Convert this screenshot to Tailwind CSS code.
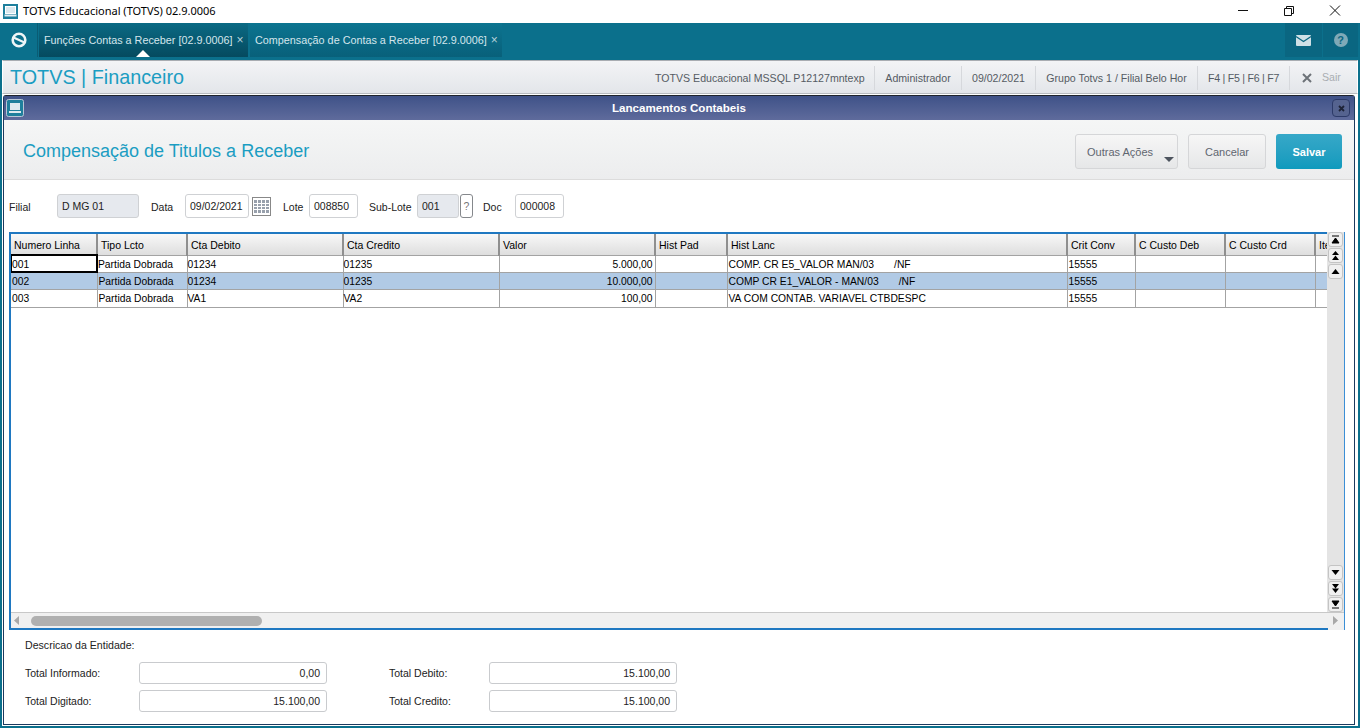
<!DOCTYPE html>
<html lang="pt-BR">
<head>
<meta charset="UTF-8">
<title>TOTVS Educacional</title>
<script src="https://cdn.jsdelivr.net/npm/@tailwindcss/browser@4"></script>
</head>
<body class="bg-white">
<div class="w-[1360px] h-[728px] overflow-hidden flex flex-col font-['Liberation_Sans',sans-serif] text-[11px] text-[#222]">

  <!-- window title bar -->
  <div class="h-[23px] bg-white flex items-center shrink-0">
    <svg class="ml-[3px] w-[15px] h-[15px]" viewBox="0 0 15 15"><rect width="15" height="15" fill="#1d7f9c"/><rect x="2.500" y="2.500" width="10" height="7" fill="#dbe8ee" stroke="#fff"/><rect x="1.500" y="10.500" width="12" height="2" fill="#e6eef2"/></svg>
    <span class="ml-[5px] font-['Noto_Sans',sans-serif] text-[11px] text-black">TOTVS Educacional (TOTVS) 02.9.0006</span>
    <div class="ml-auto flex items-center">
      <svg class="w-[46px] h-[23px]" viewBox="0 0 46 23"><path d="M18 10.500H28" stroke="#111"/></svg>
      <svg class="w-[46px] h-[23px]" viewBox="0 0 46 23"><path d="M18.500 8.500h7v7h-7zM20.500 8.500v-2h7v7h-2" fill="none" stroke="#111"/></svg>
      <svg class="w-[46px] h-[23px] mr-[2px]" viewBox="0 0 46 23"><path d="M18 5.500l10 10M28 5.500l-10 10" stroke="#111"/></svg>
    </div>
  </div>

  <!-- module tabs -->
  <div class="h-[37px] shrink-0 bg-[#0b708c] flex items-start">
    <div class="w-[38px] h-[34px] flex items-center justify-center border-r border-[#0a5c74]">
      <svg class="w-[18px] h-[18px]" viewBox="0 0 18 18"><circle cx="9" cy="9" r="6.300" fill="none" stroke="#eef5f7" stroke-width="2.600"/><path d="M3.500 6.500L14.500 11.500" stroke="#eef5f7" stroke-width="2.200"/></svg>
    </div>
    <div class="relative ml-[1px] w-[209px] h-[34px] bg-gradient-to-b from-[#0b6a84] to-[#054a5f] flex items-center pl-[5px] text-[#d5e6ec] text-[10.800px] whitespace-nowrap">
      <span>Funções Contas a Receber [02.9.0006]</span>
      <span class="ml-[4px] text-[#b7d2da] text-[12px] leading-none">×</span>
      <div class="absolute left-[97px] bottom-0 w-0 h-0 border-x-[7px] border-x-transparent border-b-[7px] border-b-white"></div>
    </div>
    <div class="ml-[2px] w-[252px] h-[34px] bg-gradient-to-b from-[#0c7490] to-[#08607a] flex items-center pl-[5px] text-[#d5e6ec] text-[10.800px] whitespace-nowrap">
      <span>Compensação de Contas a Receber [02.9.0006]</span>
      <span class="ml-[4px] text-[#b7d2da] text-[12px] leading-none">×</span>
    </div>
    <div class="ml-auto w-[37px] h-[34px] bg-[#0a6681] flex items-center justify-center">
      <svg class="w-[15px] h-[11px]" viewBox="0 0 15 11"><rect width="15" height="11" rx="1" fill="#cfe0e6"/><path d="M0 1.500L7.500 6.500L15 1.500" fill="none" stroke="#0a6681" stroke-width="1.200"/></svg>
    </div>
    <div class="ml-[1px] mr-[2px] w-[35px] h-[34px] bg-[#0a6681] flex items-center justify-center">
      <span class="w-[14px] h-[14px] rounded-full bg-[#7fa9b7] text-[#0a6681] text-[11px] font-bold flex items-center justify-center">?</span>
    </div>
  </div>

  <!-- teal frame around the workspace -->
  <div class="flex-1 bg-[#0b708c] px-[2px] pb-[2px] flex flex-col min-h-0">
    <div class="flex-1 bg-white flex flex-col min-h-0">

      <!-- module header -->
      <div class="h-[34px] shrink-0 pt-[2px] bg-gradient-to-b from-[#f3f4f6] to-[#e3e6ea] border border-[#a9adb2] border-b-[#b9bcc0] border-x-[#fff] flex items-center">
        <div class="pl-[7px] text-[19.800px] leading-none text-[#1b9dc2]">TOTVS | Financeiro</div>
        <div class="ml-auto flex items-center h-[24px] text-[#555b63] text-[10.600px]">
          <div class="w-[231px] pl-[11px] border-r border-[#d6d8dc] leading-[24px]">TOTVS Educacional MSSQL P12127mntexp</div>
          <div class="w-[87px] text-center border-r border-[#d6d8dc] leading-[24px]">Administrador</div>
          <div class="w-[74px] text-center border-r border-[#d6d8dc] leading-[24px]">09/02/2021</div>
          <div class="w-[162px] text-center border-r border-[#d6d8dc] leading-[24px]">Grupo Totvs 1 / Filial Belo Hor</div>
          <div class="w-[92px] text-center border-r border-[#d6d8dc] leading-[24px] tracking-[-0.25px]">F4 | F5 | F6 | F7</div>
          <div class="w-[67px] flex items-center pl-[12px]">
            <svg class="w-[10px] h-[10px]" viewBox="0 0 10 10"><path d="M1 1l8 8M9 1l-8 8" stroke="#6d7278" stroke-width="2"/></svg>
            <span class="ml-[10px] text-[#a9adb2]">Sair</span>
          </div>
        </div>
      </div>

      <!-- dialog -->
      <div class="mt-[1px] ml-[1px] mr-[3px] mb-[1px] flex-1 min-h-0 flex flex-col bg-white border border-[#1c3a5e] border-t-[#20242c] rounded-t-[3px]">
        <div class="relative h-[24px] shrink-0 bg-gradient-to-b from-[#3f5288] to-[#5f6b9c] flex items-center justify-center">
          <svg class="absolute left-[2px] top-[3px] w-[18px] h-[18px]" viewBox="0 0 18 18"><rect x="0.500" y="0.500" width="17" height="17" rx="2" fill="#1f7f9c" stroke="#b8c6d6"/><rect x="4" y="4" width="10" height="7" fill="#dfeaf0"/><rect x="3" y="12" width="12" height="2" fill="#dfeaf0"/></svg>
          <span class="font-bold text-white text-[11.600px]">Lancamentos Contabeis</span>
          <div class="absolute right-[4px] top-[3px] w-[18px] h-[18px] rounded-[4px] bg-[#55638f] border border-[#2c3a68] flex items-center justify-center">
            <svg class="w-[7px] h-[7px]" viewBox="0 0 7 7"><path d="M1 1l5 5M6 1L1 6" stroke="#1d2337" stroke-width="1.800"/></svg>
          </div>
        </div>

        <div class="h-[60px] shrink-0 bg-gradient-to-b from-[#f5f6f6] to-[#ecedee] border-b border-[#dcdcdc] flex items-center">
          <div class="ml-[19px] mt-[4px] text-[18px] text-[#1b9dc2]">Compensação de Titulos a Receber</div>
          <div class="ml-auto mr-[12px] mt-[4px] flex items-center gap-[10px] text-[11px]">
            <div class="relative w-[103px] h-[35px] pt-[2px] rounded-[3px] border border-[#d5d6d8] bg-gradient-to-b from-[#f6f6f6] to-[#e6e7e8] text-[#5f6670] flex items-center pl-[11px]">
              Outras Ações
              <div class="absolute right-[3px] bottom-[6px] w-0 h-0 border-x-[5px] border-x-transparent border-t-[5px] border-t-[#4d545e]"></div>
            </div>
            <div class="w-[78px] h-[35px] pt-[2px] rounded-[3px] border border-[#d5d6d8] bg-gradient-to-b from-[#f6f6f6] to-[#e6e7e8] text-[#5f6670] flex items-center justify-center">Cancelar</div>
            <div class="w-[66px] h-[35px] pt-[2px] rounded-[3px] bg-gradient-to-b from-[#36a8c8] to-[#0e9abd] text-white font-bold flex items-center justify-center">Salvar</div>
          </div>
        </div>

        <!-- lote fields -->
        <div class="h-[52px] shrink-0 flex items-center pl-[5px] text-[10.500px]">
          <span class="w-[48px] pt-[3px]">Filial</span>
          <div class="w-[82px] h-[24px] rounded-[3px] border border-[#cfd1d4] bg-[#e6e9ee] pl-[4px] leading-[22px]">D MG 01</div>
          <span class="ml-[12px] w-[34px] pt-[3px]">Data</span>
          <div class="w-[64px] h-[24px] rounded-[3px] border border-[#cfd1d4] pl-[4px] leading-[22px]">09/02/2021</div>
          <svg class="ml-[3px] w-[19px] h-[19px]" viewBox="0 0 19 19">
            <rect x="0.500" y="0.500" width="18" height="18" fill="none" stroke="#111" stroke-dasharray="1 1"/>
            <path d="M2 3h15v13H2z" fill="#98a0ac"/>
            <path d="M2 6.500h15M2 9.500h15M2 12.500h15M5.500 3v13M9.500 3v13M13.500 3v13" stroke="#fff"/>
          </svg>
          <span class="ml-[12px] w-[26px] pt-[3px]">Lote</span>
          <div class="w-[49px] h-[24px] rounded-[3px] border border-[#cfd1d4] pl-[4px] leading-[22px]">008850</div>
          <span class="ml-[11px] w-[48px] pt-[3px]">Sub-Lote</span>
          <div class="w-[42px] h-[24px] rounded-[3px] border border-[#cfd1d4] bg-[#e6e9ee] pl-[4px] leading-[22px]">001</div>
          <div class="ml-[1px] w-[13px] h-[24px] rounded-[3px] border border-[#85888c] text-center leading-[22px] text-[#777]">?</div>
          <span class="ml-[10px] w-[32px] pt-[3px]">Doc</span>
          <div class="w-[49px] h-[24px] rounded-[3px] border border-[#cfd1d4] pl-[4px] leading-[22px]">000008</div>
        </div>

        <!-- grid -->
        <div class="ml-[5px] mr-[9px] h-[398px] shrink-0 border-l-2 border-l-[#1f78c1] border-r border-r-[#3b8fd6] flex flex-col overflow-hidden">
          <div class="flex-1 min-h-0 flex">
            <div class="w-[1316px] overflow-hidden border-t-2 border-[#1f78c1]">
              <table class="table-fixed w-[1316px] border-collapse text-[10.300px] text-black">
                <colgroup><col class="w-[86px]"><col class="w-[90px]"><col class="w-[156px]"><col class="w-[156px]"><col class="w-[156px]"><col class="w-[72px]"><col class="w-[340px]"><col class="w-[68px]"><col class="w-[90px]"><col class="w-[90px]"><col class="w-[12px]"></colgroup>
                <thead>
                  <tr class="h-[21px] bg-gradient-to-b from-[#f8f8f8] to-[#dedede] text-left text-[10.500px]">
                    <th class="font-normal border-r-2 border-[#8f8f8f] pl-[3px] pt-[3px]">Numero Linha</th>
                    <th class="font-normal border-r-2 border-[#8f8f8f] pl-[3px] pt-[3px]">Tipo Lcto</th>
                    <th class="font-normal border-r-2 border-[#8f8f8f] pl-[3px] pt-[3px]">Cta Debito</th>
                    <th class="font-normal border-r-2 border-[#8f8f8f] pl-[3px] pt-[3px]">Cta Credito</th>
                    <th class="font-normal border-r-2 border-[#8f8f8f] pl-[3px] pt-[3px]">Valor</th>
                    <th class="font-normal border-r-2 border-[#8f8f8f] pl-[3px] pt-[3px]">Hist Pad</th>
                    <th class="font-normal border-r-2 border-[#8f8f8f] pl-[3px] pt-[3px]">Hist Lanc</th>
                    <th class="font-normal border-r-2 border-[#8f8f8f] pl-[3px] pt-[3px]">Crit Conv</th>
                    <th class="font-normal border-r-2 border-[#8f8f8f] pl-[3px] pt-[3px]">C Custo Deb</th>
                    <th class="font-normal border-r-2 border-[#8f8f8f] pl-[3px] pt-[3px]">C Custo Crd</th>
                    <th class="font-normal pl-[3px] pt-[3px] overflow-hidden whitespace-nowrap">Ite</th>
                  </tr>
                </thead>
                <tbody class="[&_td]:pt-[1px]">
                  <tr class="h-[17px] border-y border-[#a3a3a3]">
                    <td class="outline-2 -outline-offset-1 outline-black pl-[1px]">001</td><td class="border-r border-[#a3a3a3] pl-[1px]">Partida Dobrada</td><td class="border-r border-[#a3a3a3]">01234</td><td class="border-r border-[#a3a3a3]">01235</td><td class="border-r border-[#a3a3a3] text-right pr-[2px]">5.000,00</td><td class="border-r border-[#a3a3a3]"></td><td class="border-r border-[#a3a3a3] pl-[1px] whitespace-pre">COMP. CR E5_VALOR MAN/03       /NF</td><td class="border-r border-[#a3a3a3] pl-[1px]">15555</td><td class="border-r border-[#a3a3a3]"></td><td class="border-r border-[#a3a3a3]"></td><td></td>
                  </tr>
                  <tr class="h-[17px] border-y border-[#a3a3a3] bg-[#b1cae5]">
                    <td class="border-r border-[#a3a3a3] pl-[1px]">002</td><td class="border-r border-[#a3a3a3] pl-[1px]">Partida Dobrada</td><td class="border-r border-[#a3a3a3]">01234</td><td class="border-r border-[#a3a3a3]">01235</td><td class="border-r border-[#a3a3a3] text-right pr-[2px]">10.000,00</td><td class="border-r border-[#a3a3a3]"></td><td class="border-r border-[#a3a3a3] pl-[1px] whitespace-pre">COMP CR E1_VALOR - MAN/03       /NF</td><td class="border-r border-[#a3a3a3] pl-[1px]">15555</td><td class="border-r border-[#a3a3a3]"></td><td class="border-r border-[#a3a3a3]"></td><td></td>
                  </tr>
                  <tr class="h-[17px] border-y border-[#a3a3a3]">
                    <td class="border-r border-[#a3a3a3] pl-[1px]">003</td><td class="border-r border-[#a3a3a3] pl-[1px]">Partida Dobrada</td><td class="border-r border-[#a3a3a3]">VA1</td><td class="border-r border-[#a3a3a3]">VA2</td><td class="border-r border-[#a3a3a3] text-right pr-[2px]">100,00</td><td class="border-r border-[#a3a3a3]"></td><td class="border-r border-[#a3a3a3] pl-[1px]">VA COM CONTAB. VARIAVEL CTBDESPC</td><td class="border-r border-[#a3a3a3] pl-[1px]">15555</td><td class="border-r border-[#a3a3a3]"></td><td class="border-r border-[#a3a3a3]"></td><td></td>
                  </tr>
                </tbody>
              </table>
            </div>
            <!-- vertical scroller buttons -->
            <div class="w-[17px] bg-[#e4e4e4] flex flex-col items-center gap-[1px]">
              <button class="w-[15px] h-[15px] rounded-[3px] border border-[#c4c4c4] bg-[#f0f0f0] flex items-center justify-center"><svg class="w-[9px] h-[9px]" viewBox="0 0 9 9"><path d="M1 1h7M4.500 3L8 8H1z" stroke="#000" fill="#000"/></svg></button>
              <button class="w-[15px] h-[15px] rounded-[3px] border border-[#c4c4c4] bg-[#f0f0f0] flex items-center justify-center"><svg class="w-[9px] h-[9px]" viewBox="0 0 9 9"><path d="M4.500 0L8 4H1zM4.500 4.500L8 9H1z" fill="#000"/></svg></button>
              <button class="w-[15px] h-[15px] rounded-[3px] border border-[#c4c4c4] bg-[#f0f0f0] flex items-center justify-center"><svg class="w-[9px] h-[5px]" viewBox="0 0 9 5"><path d="M4.500 0L8.500 5H.5z" fill="#000"/></svg></button>
              <div class="flex-1"></div>
              <button class="w-[15px] h-[15px] rounded-[3px] border border-[#c4c4c4] bg-[#f0f0f0] flex items-center justify-center"><svg class="w-[9px] h-[5px]" viewBox="0 0 9 5"><path d="M.5 0h8L4.500 5z" fill="#000"/></svg></button>
              <button class="w-[15px] h-[15px] rounded-[3px] border border-[#c4c4c4] bg-[#f0f0f0] flex items-center justify-center"><svg class="w-[9px] h-[9px]" viewBox="0 0 9 9"><path d="M1 0h7L4.500 4.500zM1 4.500h7L4.500 9z" fill="#000"/></svg></button>
              <button class="w-[15px] h-[15px] rounded-[3px] border border-[#c4c4c4] bg-[#f0f0f0] flex items-center justify-center"><svg class="w-[9px] h-[9px]" viewBox="0 0 9 9"><path d="M1 1h7L4.500 6zM1 8h7" stroke="#000" fill="#000"/></svg></button>
            </div>
          </div>
          <!-- horizontal scroller -->
          <div class="shrink-0 bg-[#f0f0f0] border-t border-[#c8c8c8]">
            <div class="h-[15px] flex items-center">
              <svg class="ml-[3px] w-[5px] h-[9px]" viewBox="0 0 5 9"><path d="M5 0v9L0 4.500z" fill="#a8a8a8"/></svg>
              <div class="ml-[12px] w-[231px] h-[10px] rounded-full bg-[#b0b0b0]"></div>
              <svg class="ml-auto mr-[6px] w-[5px] h-[9px]" viewBox="0 0 5 9"><path d="M0 0v9L5 4.500z" fill="#a8a8a8"/></svg>
            </div>
            <div class="h-[2px] w-[1317px] bg-[#1f78c1]"></div>
          </div>
        </div>

        <!-- totals -->
        <div class="pl-[21px] text-[10.600px]">
          <div class="mt-[9px] h-[13px] leading-[13px]">Descricao da Entidade:</div>
          <div class="mt-[10px] grid grid-cols-[114px_188px_62px_100px_188px] grid-rows-[22px_22px] gap-y-[6px] items-center text-[10.500px]">
            <span class="pt-[2px]">Total Informado:</span>
            <div class="h-[22px] rounded-[3px] border border-[#c9cbce] text-right pr-[6px] leading-[20px]">0,00</div>
            <span class="col-start-4 pt-[2px]">Total Debito:</span>
            <div class="h-[22px] rounded-[3px] border border-[#c9cbce] text-right pr-[6px] leading-[20px]">15.100,00</div>
            <span class="pt-[2px]">Total Digitado:</span>
            <div class="h-[22px] rounded-[3px] border border-[#c9cbce] text-right pr-[6px] leading-[20px]">15.100,00</div>
            <span class="col-start-4 pt-[2px]">Total Credito:</span>
            <div class="h-[22px] rounded-[3px] border border-[#c9cbce] text-right pr-[6px] leading-[20px]">15.100,00</div>
          </div>
        </div>
      </div>
    </div>
  </div>
</div>
</body>
</html>
